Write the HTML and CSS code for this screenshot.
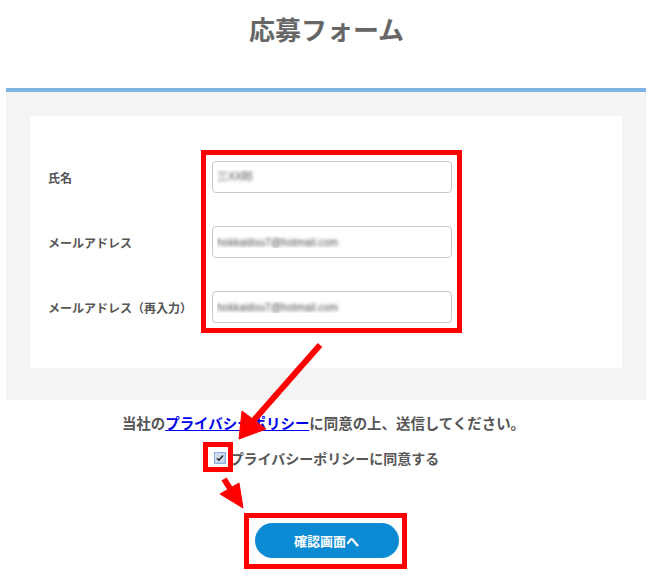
FILE: index.html
```html
<!DOCTYPE html>
<html lang="ja">
<head>
<meta charset="utf-8">
<title>応募フォーム</title>
<link rel="stylesheet" href="styles.css">
</head>
<body>
<div class="page">
  <header class="head">
    <h1 class="title">応募フォーム</h1>
  </header>
  <section class="panel">
    <div class="card">
      <div class="row">
        <label class="label" for="f-name">氏名</label>
        <input class="field" id="f-name" type="text" value="三XX郎">
      </div>
      <div class="row">
        <label class="label" for="f-mail">メールアドレス</label>
        <input class="field" id="f-mail" type="text" value="hokkaidou7@hotmail.com">
      </div>
      <div class="row">
        <label class="label" for="f-mail2">メールアドレス（再入力）</label>
        <input class="field" id="f-mail2" type="text" value="hokkaidou7@hotmail.com">
      </div>
    </div>
  </section>
  <div class="agree">
    <p class="note">当社の<a class="link" href="#">プライバシーポリシー</a>に同意の上、送信してください。</p>
    <p class="check-line">
      <span class="checkbox"><svg width="12" height="12" viewBox="0 0 12 12"><defs><linearGradient id="cb" x1="0" y1="0" x2="1" y2="1"><stop offset="0" stop-color="#dfe9f8"/><stop offset="1" stop-color="#a9c3ea"/></linearGradient></defs><rect x="0.5" y="0.5" width="11" height="11" fill="url(#cb)" stroke="#8eaee0"/><rect x="2" y="2" width="8" height="8" fill="#cdd9ea"/><path d="M3 6.2 L5 8.2 L9 3.6" fill="none" stroke="#2b2b2b" stroke-width="1.6"/></svg></span><span class="check-text">プライバシーポリシーに同意する</span>
    </p>
    <div class="actions">
      <button class="btn" type="button">確認画面へ</button>
    </div>
  </div>
  <svg class="marks" width="653" height="582" viewBox="0 0 653 582">
    <g fill="none" stroke="#ff0000" stroke-width="5">
      <rect x="203.5" y="152.5" width="256" height="178"/>
      <rect x="205.5" y="444.5" width="25" height="25"/>
      <rect x="246.5" y="515.5" width="158" height="51"/>
    </g>
    <g fill="#ff0000" stroke="#ff0000">
      <line x1="320" y1="345" x2="254" y2="420" stroke-width="6"/>
      <polygon points="242,411 266,429 239,439" stroke-width="1"/>
      <line x1="224" y1="479" x2="231" y2="490" stroke-width="6"/>
      <polygon points="220,494 239,483 243,508" stroke-width="1"/>
    </g>
  </svg>
</div>
</body>
</html>
```
FILE: styles.css
```css
* { box-sizing: border-box; }
html, body { margin: 0; padding: 0; background: #ffffff; }
body {
  font-family: "Noto Sans CJK JP", "Noto Sans", sans-serif;
  color: #555555;
}
.page {
  position: relative;
  width: 653px;
  height: 582px;
  overflow: hidden;
}
.head {
  height: 88px;
  padding-top: 13px;
}
.title {
  margin: 0;
  text-align: center;
  font-size: 26px;
  line-height: 32px;
  font-weight: 700;
  color: #666666;
}
.panel {
  margin: 0 7px 0 6px;
  border-top: 4px solid #7fb3e4;
  background: #f4f4f4;
  padding: 24px 24px 32px;
}
.card {
  background: #ffffff;
  height: 252px;
  padding: 45px 0 0 18px;
  display: flex;
  flex-direction: column;
  gap: 33px;
}
.row {
  display: grid;
  grid-template-columns: 164px 240px;
  align-items: center;
  height: 32px;
}
.label {
  font-size: 12px;
  font-weight: 700;
  color: #555555;
}
.field {
  width: 240px;
  height: 32px;
  border: 1px solid #c8c8c8;
  border-radius: 4px;
  padding: 0 4px;
  font-family: "Liberation Sans", sans-serif;
  font-size: 10.5px;
  color: transparent;
  text-shadow: 0 0 3.5px rgba(40, 40, 40, 0.85);
  background: #ffffff;
  outline: none;
}
.agree {
  padding-top: 11px;
}
.note {
  margin: 0;
  text-align: center;
  font-size: 14.45px;
  line-height: 24px;
  font-weight: 700;
  color: #555555;
  padding-right: 6px;
}
.link {
  color: #0000ee;
  text-decoration: underline;
}
.check-line {
  margin: 11px 0 0;
  display: flex;
  justify-content: center;
  align-items: center;
  height: 24px;
  font-size: 14px;
  font-weight: 700;
}
.checkbox {
  display: inline-flex;
  width: 12px;
  height: 12px;
  margin-right: 4px;
}
.check-text {
  color: #555555;
}
.actions {
  margin-top: 53px;
  display: flex;
  justify-content: center;
}
.btn {
  width: 144px;
  height: 35px;
  border: none;
  border-radius: 18px;
  background: #0b8bd3;
  color: #ffffff;
  font-family: "Noto Sans CJK JP", sans-serif;
  font-size: 13px;
  font-weight: 700;
}
.marks {
  position: absolute;
  left: 0;
  top: 0;
  pointer-events: none;
}
```
